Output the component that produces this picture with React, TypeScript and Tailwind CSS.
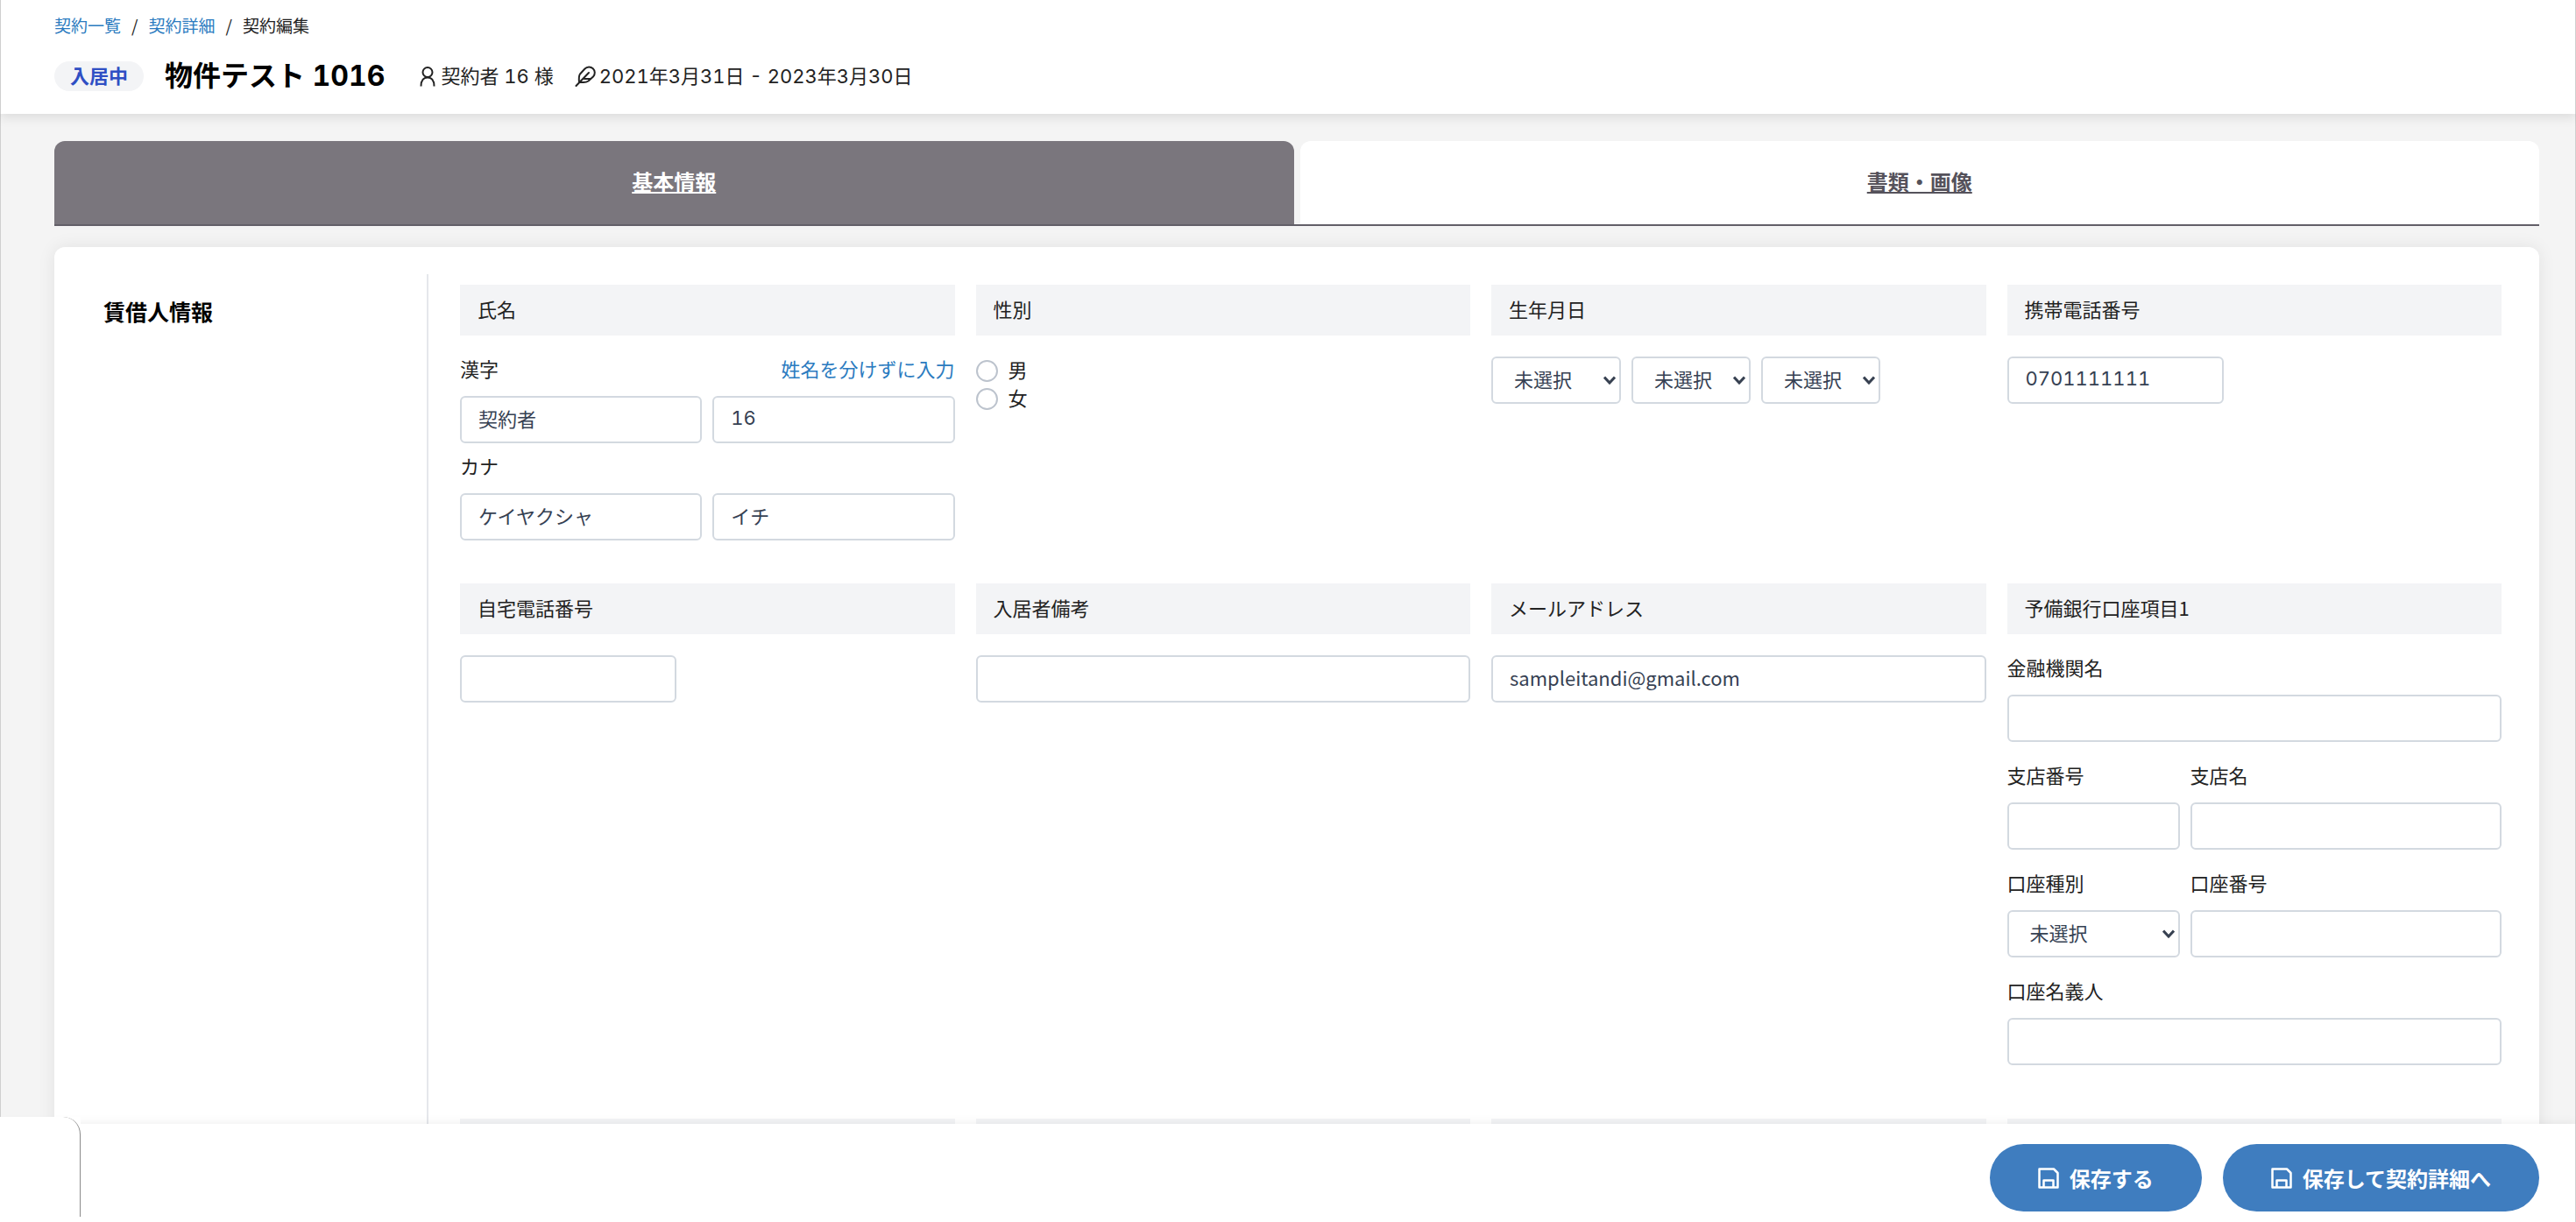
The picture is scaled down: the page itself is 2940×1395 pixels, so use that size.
import type { ReactNode } from "react";

const inputClass =
  "h-[54px] min-w-0 rounded-md border-2 border-[#d3d9e0] bg-white px-[19px] pb-1 text-[22px] text-gray-700";
const numberClass = "font-['Inter','Noto_Sans_CJK_JP',sans-serif] tabular-nums";

function Section({ title, children }: { title: string; children?: ReactNode }) {
  return (
    <section className="min-w-0">
      <h3 className="mb-6 h-[58px] bg-gray-100 px-5 text-[22px] leading-[54px]">
        {title}
      </h3>
      {children}
    </section>
  );
}

type FieldProps = {
  id: string;
  label: string;
  className?: string;
  children: ReactNode;
};

function Field({ id, label, className = "", children }: FieldProps) {
  return (
    <div className={`flex min-w-0 flex-col ${className}`}>
      <label htmlFor={id} className="mb-[19px] text-[22px] leading-[26px]">
        {label}
      </label>
      {children}
    </div>
  );
}

type SelectProps = {
  id?: string;
  label?: string;
  className: string;
};

function Select({ id, label, className }: SelectProps) {
  return (
    <div className={`relative ${className}`}>
      <select
        id={id}
        aria-label={label}
        className="h-[54px] w-full appearance-none rounded-md border-2 border-[#d3d9e0] bg-white pb-1 pl-6 text-[22px] text-gray-700"
      >
        <option>未選択</option>
      </select>
      <svg
        viewBox="0 0 14 10"
        className="pointer-events-none absolute top-[22px] right-[6px] h-[10px] w-[14px]"
        fill="none"
        stroke="#374151"
        strokeWidth="3"
      >
        <path d="M1 1.5 7 8l6-6.5" />
      </svg>
    </div>
  );
}

function Gender({ id, label }: { id: string; label: string }) {
  return (
    <div className="flex h-8 items-center gap-3">
      <input
        id={id}
        type="radio"
        name="gender"
        className="size-[25px] appearance-none rounded-full border-2 border-[#bcc3cd] bg-white checked:border-[7px] checked:border-[#3f7dbf]"
      />
      <label htmlFor={id} className="pb-1 text-[22px] leading-7">
        {label}
      </label>
    </div>
  );
}

function PersonIcon() {
  return (
    <svg viewBox="0 0 18 24" className="h-6 w-[18px]" fill="none" stroke="currentColor" strokeWidth="2">
      <circle cx="9" cy="7.5" r="5.5" />
      <path d="M1.5 23.500C1.500 17 4.500 13.500 9 13.500s7.500 3.500 7.500 10" />
    </svg>
  );
}

function FeatherIcon() {
  return (
    <svg viewBox="0 0 24 24" className="size-6" fill="none" stroke="currentColor" strokeWidth="2" strokeLinecap="round" strokeLinejoin="round">
      <path d="M21 12.500a6.500 6.500 0 0 0-9.500-9L6 9.500C4.500 11.500 4.500 14 5 19h5c2.500 0 4-.5 5.500-1.500z" />
      <path d="M16 8 1.500 23M17.500 15H11" />
    </svg>
  );
}

function SaveIcon() {
  return (
    <svg viewBox="0 0 24 24" className="size-6" fill="none" stroke="currentColor" strokeWidth="2.500" strokeLinejoin="round">
      <path d="M1.500 1.500H18l4.500 4.500v16.500h-21z" />
      <path d="M6.500 22v-7.500h11V22" />
    </svg>
  );
}

export default function App() {
  return (
    <div className="flex h-screen flex-col overflow-hidden bg-[#f4f4f4] font-['Noto_Sans_CJK_JP',sans-serif] text-[22px] text-[#222]">
      <header className="relative z-10 h-[130px] shrink-0 border-x border-[#cfcfcf] bg-white px-[61px] pt-[15px] shadow-[0_4px_12px_rgba(0,0,0,0.1)]">
        <nav className="flex gap-3 text-[19px] leading-7">
          <a href="#list" className="text-[#2b7bc0]">契約一覧</a>
          <span>/</span>
          <a href="#detail" className="text-[#2b7bc0]">契約詳細</a>
          <span>/</span>
          <span>契約編集</span>
        </nav>
        <div className="mt-6 flex h-10 items-center">
          <span className="rounded-full bg-gray-100 px-[18px] pb-1 text-[22px] leading-[30px] font-bold text-[#2f4fc4]">
            入居中
          </span>
          <h1 className={`ml-6 text-[32px] leading-10 font-bold text-black ${numberClass}`}>
            物件テスト 1016
          </h1>
          <div className={`ml-10 flex items-center gap-[6px] ${numberClass}`}>
            <PersonIcon />
            <span>契約者 16 様</span>
          </div>
          <div className={`ml-6 flex items-center gap-1 ${numberClass}`}>
            <FeatherIcon />
            <span>2021年3月31日 - 2023年3月30日</span>
          </div>
        </div>
      </header>

      <main className="flex min-h-0 flex-1 flex-col overflow-hidden border-x border-[#cfcfcf] pt-[31px] pr-[41px] pl-[61px]">
        <nav className="flex shrink-0 border-b-2 border-[#625f68] text-[24px] font-bold">
          <a
            href="#basic"
            className="mr-[7px] flex h-[95px] flex-1 items-center justify-center rounded-t-xl bg-[#7a767d] pb-1 text-white underline"
          >
            基本情報
          </a>
          <a
            href="#documents"
            className="flex h-[95px] flex-1 items-center justify-center rounded-t-xl bg-white pb-1 text-[#55525b] underline"
          >
            書類・画像
          </a>
        </nav>

        <div className="mt-6 flex flex-1 rounded-t-xl bg-white pt-[31px] pr-[43px] shadow-[0_0_20px_rgba(0,0,0,0.08)]">
          <h2 className="w-[425px] shrink-0 pt-6 pl-14 text-[25px] leading-9 font-bold text-black">
            賃借人情報
          </h2>
          <form className="grid flex-1 grid-cols-4 content-start gap-x-6 gap-y-[49px] border-l-2 border-gray-200 pt-3 pl-9">
            <Section title="氏名">
              <div className="mb-[19px] flex justify-between leading-[26px]">
                <label htmlFor="sei">漢字</label>
                <a href="#name" className="text-[#2b7bc0]">姓名を分けずに入力</a>
              </div>
              <div className="grid grid-cols-2 gap-3">
                <input id="sei" className={inputClass} defaultValue="契約者" />
                <input aria-label="名" className={`${inputClass} ${numberClass}`} defaultValue="16" />
              </div>
              <Field id="sei-kana" label="カナ" className="mt-3">
                <div className="grid grid-cols-2 gap-3">
                  <input id="sei-kana" className={inputClass} defaultValue="ケイヤクシャ" />
                  <input aria-label="名（カナ）" className={inputClass} defaultValue="イチ" />
                </div>
              </Field>
            </Section>
            <Section title="性別">
              <Gender id="male" label="男" />
              <Gender id="female" label="女" />
            </Section>
            <Section title="生年月日">
              <div className="flex gap-3">
                <Select label="年" className="w-[148px]" />
                <Select label="月" className="w-[136px]" />
                <Select label="日" className="w-[136px]" />
              </div>
            </Section>
            <Section title="携帯電話番号">
              <input
                aria-label="携帯電話番号"
                className={`${inputClass} ${numberClass} w-[247px]`}
                defaultValue="0701111111"
              />
            </Section>

            <Section title="自宅電話番号">
              <input aria-label="自宅電話番号" className={`${inputClass} w-[247px]`} />
            </Section>
            <Section title="入居者備考">
              <input aria-label="入居者備考" className={`${inputClass} w-full`} />
            </Section>
            <Section title="メールアドレス">
              <input
                aria-label="メールアドレス"
                type="email"
                className={`${inputClass} w-full`}
                defaultValue="sampleitandi@gmail.com"
              />
            </Section>
            <Section title="予備銀行口座項目1">
              <div className="grid grid-cols-[197px_1fr] gap-x-3 gap-y-6 pb-3">
                <Field id="bank" label="金融機関名" className="col-span-2">
                  <input id="bank" className={inputClass} />
                </Field>
                <Field id="branch-no" label="支店番号">
                  <input id="branch-no" className={inputClass} />
                </Field>
                <Field id="branch" label="支店名">
                  <input id="branch" className={inputClass} />
                </Field>
                <Field id="account-type" label="口座種別">
                  <Select id="account-type" className="w-full" />
                </Field>
                <Field id="account-no" label="口座番号">
                  <input id="account-no" className={inputClass} />
                </Field>
                <Field id="holder" label="口座名義人" className="col-span-2">
                  <input id="holder" className={inputClass} />
                </Field>
              </div>
            </Section>

            <Section title="" />
            <Section title="" />
            <Section title="" />
            <Section title="" />
          </form>
        </div>
      </main>

      <footer className="relative z-10 flex h-28 shrink-0 items-start justify-end gap-6 border-r border-[#cfcfcf] bg-white pt-[23px] pr-[41px] shadow-[0_-2px_10px_rgba(0,0,0,0.06)]">
        <div className="absolute -top-2 left-0 h-[114px] w-[92px] bg-white">
          <div className="h-full rounded-tr-[20px] border-r border-[#8a8a8a]" />
        </div>
        <button
          type="button"
          className="flex h-[77px] items-center gap-3 rounded-full bg-[#3f7dbf] px-[55px] text-[24px] font-bold text-white"
        >
          <SaveIcon />
          保存する
        </button>
        <button
          type="button"
          className="flex h-[77px] items-center gap-3 rounded-full bg-[#3f7dbf] px-[55px] text-[24px] font-bold text-white"
        >
          <SaveIcon />
          保存して契約詳細へ
        </button>
      </footer>
    </div>
  );
}
